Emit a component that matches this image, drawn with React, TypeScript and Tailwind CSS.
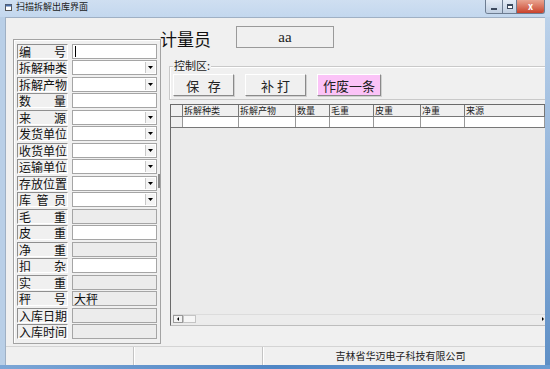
const FONT = { fontFamily: '"Noto Sans CJK SC", "Liberation Sans", sans-serif' };

type Row = { label: string[]; kind: 'white' | 'gray' | 'combo'; value?: string; caret?: boolean };

const rows: Row[] = [
  { label: ['编', '号'], kind: 'white', caret: true },
  { label: ['拆', '解', '种', '类'], kind: 'combo' },
  { label: ['拆', '解', '产', '物'], kind: 'combo' },
  { label: ['数', '量'], kind: 'white' },
  { label: ['来', '源'], kind: 'combo' },
  { label: ['发', '货', '单', '位'], kind: 'combo' },
  { label: ['收', '货', '单', '位'], kind: 'combo' },
  { label: ['运', '输', '单', '位'], kind: 'combo' },
  { label: ['存', '放', '位', '置'], kind: 'combo' },
  { label: ['库', '管', '员'], kind: 'combo' },
  { label: ['毛', '重'], kind: 'gray' },
  { label: ['皮', '重'], kind: 'white' },
  { label: ['净', '重'], kind: 'gray' },
  { label: ['扣', '杂'], kind: 'white' },
  { label: ['实', '重'], kind: 'gray' },
  { label: ['秤', '号'], kind: 'gray', value: '大秤' },
  { label: ['入', '库', '日', '期'], kind: 'gray' },
  { label: ['入', '库', '时', '间'], kind: 'gray' },
];

const columns = [
  { title: '', w: 'w-[12px]' },
  { title: '拆解种类', w: 'w-[56px]' },
  { title: '拆解产物', w: 'w-[57px]' },
  { title: '数量', w: 'w-[34px]' },
  { title: '毛重', w: 'w-[44px]' },
  { title: '皮重', w: 'w-[47px]' },
  { title: '净重', w: 'w-[44px]' },
  { title: '来源', w: 'flex-1' },
];

function Arrow() {
  return (
    <div className="absolute right-[1px] top-[1px] bottom-[1px] w-[10px] bg-[#f4f4f4] border-l border-[#c8c8c8] flex items-center justify-center">
      <svg width="5" height="3" viewBox="0 0 5 3">
        <path d="M0 0h5L2.5 3z" fill="#000" />
      </svg>
    </div>
  );
}

function FieldRow({ row }: { row: Row }) {
  const box = row.kind === 'gray' ? 'bg-[#ececec]' : 'bg-white';
  return (
    <div className="flex items-center h-[16.5px]">
      <div className="w-[51px] h-[15px] flex justify-between items-center px-[1px] border border-t-[#8f8f8f] border-l-[#8f8f8f] border-b-white border-r-white bg-[#f0f0f0] text-[12px] leading-[13px] text-[#111] overflow-hidden">
        {row.label.map((c, i) => (
          <span key={i}>{c}</span>
        ))}
      </div>
      <div className={`relative ml-[4px] w-[85px] h-[15px] border border-[#a5a5a5] ${box} flex items-center text-[12px] leading-[13px] text-[#111] overflow-hidden`}>
        {row.caret && <span className="ml-[2px] w-[1px] h-[11px] bg-black" />}
        {row.value && <span className="ml-[1px]">{row.value}</span>}
        {row.kind === 'combo' && <Arrow />}
      </div>
    </div>
  );
}

function Button({ children, pink }: { children: React.ReactNode; pink?: boolean }) {
  return (
    <div
      className={`h-[22px] flex items-center justify-center text-[13px] leading-[15px] text-[#222] border border-t-white border-l-white border-b-[#8a8a8a] border-r-[#8a8a8a] shadow-[1px_1px_0_#d0d0d0] ${
        pink ? 'w-[64px] bg-[#fbc3f7]' : 'w-[61px] bg-[#f0f0f0]'
      }`}
    >
      {children}
    </div>
  );
}

export default function App() {
  return (
    <div className="w-[550px] h-[369px] flex flex-col bg-[#b9cfe7]" style={FONT}>
      {/* title bar */}
      <div className="h-[17px] flex items-start bg-gradient-to-b from-[#cfdff1] to-[#c3d7ee]">
        <div className="flex items-center h-[14px] pl-[5px]">
          <svg width="7" height="7" viewBox="0 0 7 7">
            <rect x="0.5" y="0.5" width="6" height="6" fill="#fff" stroke="#555" />
            <rect x="0.5" y="0.5" width="6" height="2" fill="#4a6ea8" />
          </svg>
          <span className="ml-[4px] text-[9px] leading-[10px] text-[#1a1a1a]">扫描拆解出库界面</span>
        </div>
        <div className="ml-auto mr-[5px] flex h-[14px] rounded-b-[3px] overflow-hidden border border-t-0 border-[#6d7d92]">
          <div className="w-[16px] bg-gradient-to-b from-[#e4ecf6] to-[#c0cfe2] flex items-end justify-center pb-[3px]">
            <div className="w-[6px] h-[2px] bg-white border border-[#3c4a5e]" />
          </div>
          <div className="w-[14px] bg-gradient-to-b from-[#e4ecf6] to-[#c0cfe2] border-l border-[#6d7d92] flex items-center justify-center">
            <div className="w-[6px] h-[5px] border border-[#3c4a5e] border-t-2 bg-white" />
          </div>
          <div className="w-[28px] bg-gradient-to-b from-[#e8a491] to-[#c8402a] border-l border-[#6d7d92] flex items-center justify-center text-white text-[9px] font-bold leading-none">
            x
          </div>
        </div>
      </div>

      <div className="flex-1 flex">
        <div className="w-[5px]" />
        {/* client */}
        <div className="flex-1 flex flex-col bg-[#f0f0f0] border-t border-l border-[#9fb0c4]">
          <div className="flex-1 flex pt-[8px]">
            {/* left group */}
            <div className="ml-[7px] mt-[13px] w-[148px] h-[305px] border border-[#a3a3a3] shadow-[inset_1px_1px_0_#fff] pt-[3px] pl-[3px] relative">
              {rows.map((r, i) => (
                <FieldRow key={i} row={r} />
              ))}
              <div className="absolute left-[144px] top-[134px] w-[2px] h-[14px] bg-[#8a8a8a]" />
            </div>

            {/* right column */}
            <div className="flex-1 flex flex-col">
              <div className="flex items-center h-[22px]">
                <span className="text-[17px] leading-[20px] text-[#111] mt-[4px] -ml-[1px]">计量员</span>
                <div className="ml-[25px] w-[98px] h-[22px] border border-[#9a9a9a] flex items-center justify-center text-[15px] text-[#222]" style={{ fontFamily: '"Liberation Serif", serif' }}>
                  aa
                </div>
              </div>

              {/* control group */}
              <div className="relative ml-[8px] mt-[18px] h-[34px] border border-r-0 border-[#c9c9c9] shadow-[inset_1px_1px_0_#fff] flex items-start gap-[11px] pl-[3px] pt-[7px]">
                <span className="absolute left-[3px] -top-[8px] bg-[#f0f0f0] px-[1px] text-[11px] leading-[13px] text-[#222]">控制区:</span>
                <Button>保&nbsp;&nbsp;&nbsp;存</Button>
                <Button>补&nbsp;打</Button>
                <Button pink>作废一条</Button>
              </div>

              {/* grid */}
              <div className="ml-[9px] mt-[4px] h-[222px] border border-r-0 border-t-[#6a6a6a] border-l-[#6a6a6a] border-b-[#bdbdbd] bg-[#ebebeb] flex flex-col relative">
                <div className="flex h-[12px] bg-[#f0f0f0] border-b border-[#777]">
                  {columns.map((c, i) => (
                    <div key={i} className={`${c.w} border-r border-[#777] text-[9px] leading-[11px] pl-[1px] text-[#222] whitespace-nowrap`}>
                      {c.title}
                    </div>
                  ))}
                </div>
                <div className="flex h-[11px] border-b border-[#777] bg-white">
                  {columns.map((c, i) => (
                    <div key={i} className={`${c.w} border-r border-[#999] ${i === 0 ? 'bg-[#f0f0f0]' : ''}`} />
                  ))}
                </div>
                {/* horizontal scrollbar */}
                <div className="mt-auto mb-[2px] ml-[2px] h-[9px] flex bg-[#ececec] border-t border-[#dcdcdc]">
                  <div className="w-[10px] border border-[#9a9a9a] bg-[#f4f4f4] flex items-center justify-center">
                    <svg width="2" height="4" viewBox="0 0 2 4"><path d="M2 0v4L0 2z" fill="#000" /></svg>
                  </div>
                  <div className="w-[13px] border border-[#c4c4c4] bg-[#f6f6f6]" />
                  <div className="flex-1" />
                  <div className="w-[5px] flex items-center justify-center">
                    <svg width="2" height="4" viewBox="0 0 2 4"><path d="M0 0v4L2 2z" fill="#000" /></svg>
                  </div>
                </div>
              </div>
            </div>
          </div>

          {/* status bar */}
          <div className="h-[19px] flex border-t border-[#d4d4d4] text-[10px] leading-[12px] text-[#222]">
            <div className="w-[128px] border-r border-[#c4c4c4]" />
            <div className="w-[129px] border-r border-[#c4c4c4] border-l border-l-white" />
            <div className="flex-1 flex items-center justify-center border-l border-white pr-[8px]">
              吉林省华迈电子科技有限公司
            </div>
          </div>
        </div>
        <div className="w-[5px] bg-gradient-to-b from-[#bcd2ea] to-[#5e8fc6]" />
      </div>
      <div className="h-[4px] bg-gradient-to-r from-[#7ca6d6] via-[#4f86c5] to-[#6a9cd2]" />
    </div>
  );
}
